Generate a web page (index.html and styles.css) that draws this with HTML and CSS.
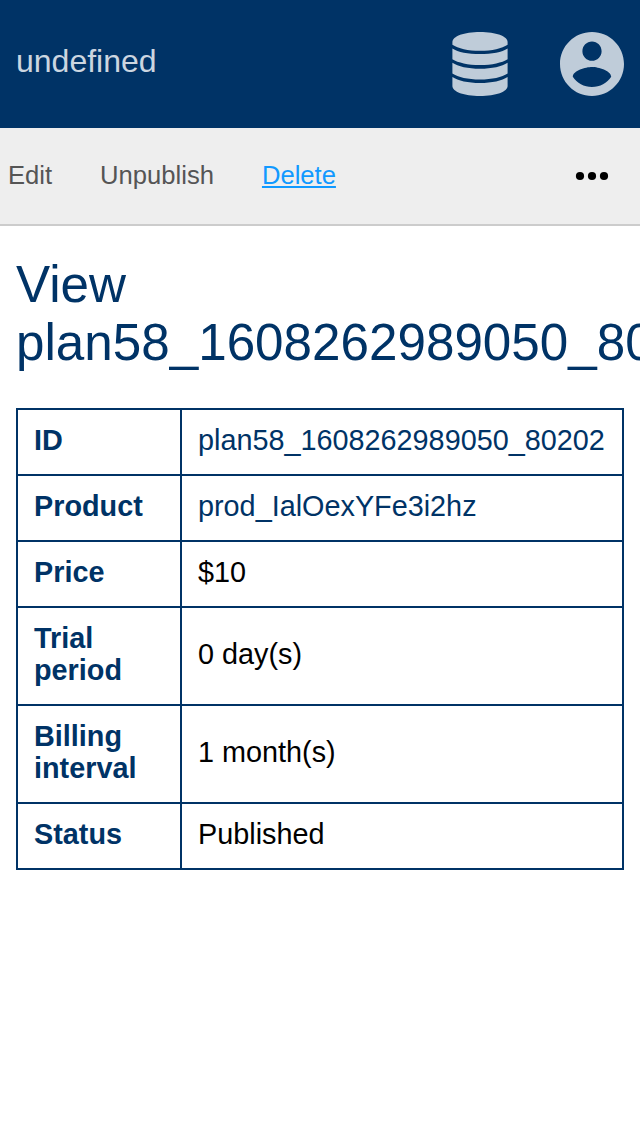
FILE: index.html
```html
<!DOCTYPE html>
<html lang="en">
<head>
<meta charset="utf-8">
<title>View plan</title>
<link rel="stylesheet" href="styles.css">
</head>
<body>
<header class="header">
  <span class="brand">undefined</span>
  <div class="menus">
    <svg class="icon" viewBox="0 0 64 64" aria-label="Administrator">
      <path d="M4.4 10C4.4 4.3 16 0 32 0S59.6 4.3 59.6 10V12.7C54 16.4 44 18.8 32 18.8S10 16.4 4.4 12.7Z"/>
      <path d="M4.4 16.4C10 20 20 22.1 32 22.1S54 20 59.6 16.4V27.2C54 30.7 44 33 32 33S10 30.7 4.4 27.2Z"/>
      <path d="M4.4 30.7C10 34.5 20 36.7 32 36.7S54 34.5 59.6 30.7V41.4C54 45.2 44 47.4 32 47.4S10 45.2 4.4 41.4Z"/>
      <path d="M4.4 45C10 48.8 20 51 32 51S54 48.8 59.6 45V54C59.6 59.7 48 64 32 64S4.4 59.7 4.4 54Z"/>
    </svg>
    <svg class="icon" viewBox="2 2 20 20" aria-label="Account">
      <path d="M12 2C6.48 2 2 6.48 2 12s4.48 10 10 10 10-4.48 10-10S17.52 2 12 2zm0 3c1.66 0 3 1.34 3 3s-1.34 3-3 3-3-1.34-3-3 1.34-3 3-3zm0 14.2c-2.5 0-4.71-1.28-6-3.22.03-1.99 4-3.08 6-3.08 1.99 0 5.97 1.09 6 3.08-1.29 1.94-3.5 3.22-6 3.22z"/>
    </svg>
  </div>
</header>
<nav class="nav">
  <a class="nav-link">Edit</a>
  <a class="nav-link">Unpublish</a>
  <a class="nav-link nav-link-active">Delete</a>
  <svg class="more" viewBox="0 0 32 8" aria-label="More"><circle cx="4" cy="4" r="4.1"/><circle cx="16" cy="4" r="4.1"/><circle cx="28" cy="4" r="4.1"/></svg>
</nav>
<main class="content">
  <h1 class="title">View plan58_1608262989050_80202</h1>
  <table class="details">
    <tr><th>ID</th><td><a class="link">plan58_1608262989050_80202</a></td></tr>
    <tr><th>Product</th><td><a class="link">prod_IalOexYFe3i2hz</a></td></tr>
    <tr><th>Price</th><td>$10</td></tr>
    <tr><th>Trial period</th><td>0 day(s)</td></tr>
    <tr><th>Billing interval</th><td>1 month(s)</td></tr>
    <tr><th>Status</th><td>Published</td></tr>
  </table>
</main>
</body>
</html>
```

FILE: styles.css
```css
* { box-sizing: border-box; }
body {
  margin: 0;
  background: #fff;
  color: #000;
  font-family: "Liberation Sans", Arial, sans-serif;
  overflow: hidden;
}
.header {
  display: flex;
  justify-content: space-between;
  align-items: flex-start;
  height: 128px;
  padding: 32px 16px;
  background: #003366;
}
.brand {
  padding-top: 11px;
  font-size: 32px;
  line-height: 36px;
  color: #ccd6e0;
}
.menus { display: flex; gap: 48px; }
.icon { width: 64px; height: 64px; fill: #bfccd9; }
.nav {
  display: flex;
  align-items: center;
  gap: 48px;
  height: 98px;
  padding: 0 32px 0 8px;
  background: #eee;
  border-bottom: 2px solid #ccc;
}
.nav-link {
  padding-bottom: 2px;
  font-size: 25.6px;
  line-height: 30px;
  color: #555;
}
.nav-link-active {
  color: #1199ff;
  text-decoration: underline 2px;
  text-underline-offset: 2px;
}
.more { width: 32px; height: 8px; margin-left: auto; overflow: visible; }
.content { padding: 30px 16px; }
.title {
  margin: 0 0 36px;
  font-size: 51.2px;
  line-height: 58px;
  font-weight: 400;
  color: #003366;
}
.details {
  width: 608px;
  table-layout: fixed;
  border-collapse: collapse;
  font-size: 28.8px;
  line-height: 32px;
}
.details th, .details td {
  border: 2px solid #003366;
  padding: 14px 16px 18px;
  text-align: left;
  vertical-align: middle;
}
.details th { width: 164px; color: #003366; }
.link { color: #003366; }
```
